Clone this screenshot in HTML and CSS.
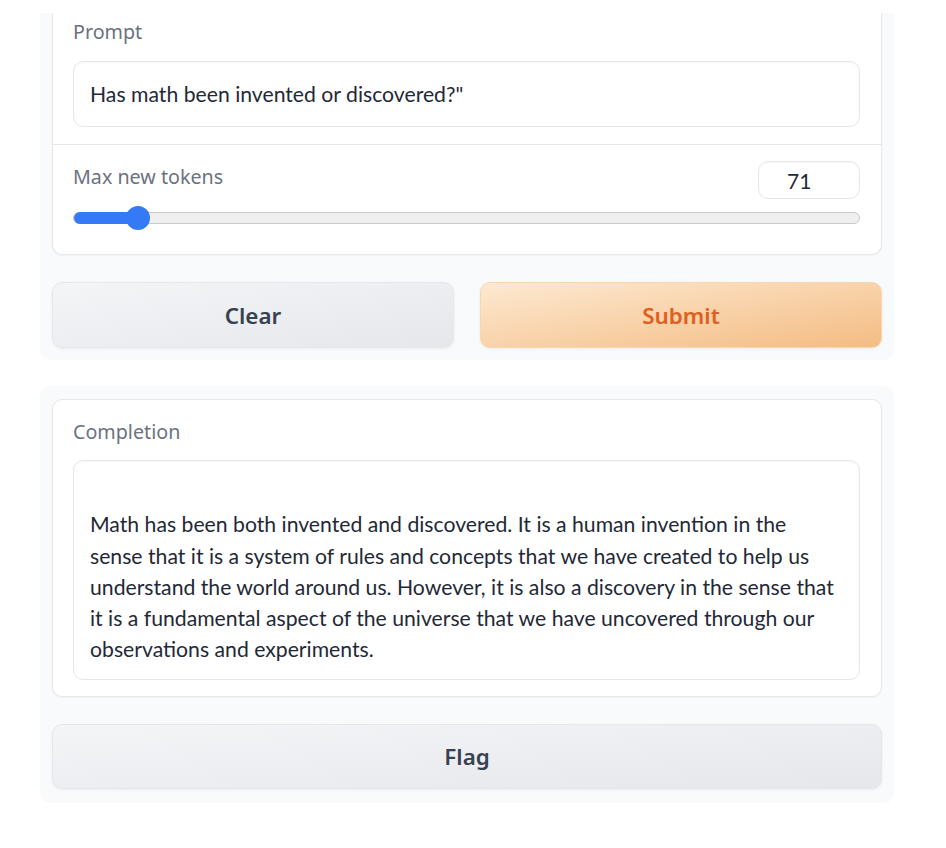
FILE: index.html
```html
<!DOCTYPE html>
<html lang="en">
<head>
<meta charset="utf-8">
<title>Completion demo</title>
<link rel="stylesheet" href="styles.css">
</head>
<body>
<main class="page">
  <section class="panel panel-top">
    <div class="card card-cut">
      <div class="field field-prompt">
        <label class="label">Prompt</label>
        <div class="input">Has math been invented or discovered?"</div>
      </div>
      <div class="field field-slider">
        <div class="slider-head">
          <label class="label label-inline">Max new tokens</label>
          <div class="number">71</div>
        </div>
        <div class="slider">
          <div class="track"></div>
          <div class="fill" style="width: 65px"></div>
          <div class="thumb" style="left: 53px"></div>
        </div>
      </div>
    </div>
    <div class="actions">
      <button class="btn btn-secondary">Clear</button>
      <button class="btn btn-primary">Submit</button>
    </div>
  </section>

  <section class="panel panel-bottom">
    <div class="card">
      <div class="field field-completion">
        <label class="label">Completion</label>
        <div class="output"><br>Math has been both invented and discovered. It is a human invention in the<br>sense that it is a system of rules and concepts that we have created to help us<br>understand the world around us. However, it is also a discovery in the sense that<br>it is a fundamental aspect of the universe that we have uncovered through our<br>observations and experiments.</div>
      </div>
    </div>
    <div class="actions">
      <button class="btn btn-secondary btn-wide">Flag</button>
    </div>
  </section>
</main>
</body>
</html>
```
FILE: styles.css
```css
* { box-sizing: border-box; }

html, body {
  margin: 0;
  padding: 0;
  background: #ffffff;
}

body {
  font-family: "Lato", "Noto Sans", sans-serif;
  color: #1f2937;
}

.page {
  padding-top: 13px;
  padding-left: 40px;
  width: 894px;
}

.panel {
  background: #f9fafb;
  padding: 0 12px 12px;
  border-radius: 0 0 10px 10px;
}

.panel-bottom {
  margin-top: 26px;
  padding: 13px 12px 14px;
  border-radius: 10px;
}

.card {
  background: #ffffff;
  border: 1px solid #e5e7eb;
  border-radius: 10px;
  box-shadow: 0 1px 2px rgba(0, 0, 0, 0.04);
}

.card-cut {
  border-top: none;
  border-radius: 0 0 10px 10px;
}

.field {
  padding: 0 21px 0 20px;
}

.field-prompt {
  padding-top: 5px;
  padding-bottom: 17px;
  border-bottom: 1px solid #e5e7eb;
}

.field-slider {
  padding-top: 16px;
  padding-bottom: 24px;
}

.field-completion {
  padding-top: 18px;
  padding-bottom: 16px;
}

.label {
  display: block;
  font-family: "Noto Sans", sans-serif;
  font-size: 19.7px;
  line-height: 28px;
  color: #6b7280;
  margin-bottom: 15px;
}

.field-completion .label {
  margin-bottom: 14px;
}

.label-inline {
  margin: 2px 0 0;
}

.input {
  border: 1px solid #e5e7eb;
  border-radius: 10px;
  padding: 16px 16px;
  font-size: 21.2px;
  line-height: 32px;
  color: #1f2937;
  box-shadow: inset 0 1px 2px rgba(0, 0, 0, 0.04);
}

.slider-head {
  display: flex;
  justify-content: space-between;
  align-items: flex-start;
}

.number {
  width: 102px;
  height: 38px;
  border: 1px solid #e5e7eb;
  border-radius: 10px;
  padding-left: 28px;
  font-size: 21px;
  line-height: 37px;
  color: #1f2937;
  box-shadow: inset 0 1px 2px rgba(0, 0, 0, 0.04);
}

.slider {
  position: relative;
  height: 24px;
  margin-top: 7px;
}

.track {
  position: absolute;
  left: 0;
  right: 0;
  top: 6px;
  height: 12px;
  background: #efefef;
  border: 1px solid #c9c9c9;
  border-radius: 6px;
}

.fill {
  position: absolute;
  left: 1px;
  top: 6px;
  height: 12px;
  background: #3479f6;
  border-radius: 6px 0 0 6px;
}

.thumb {
  position: absolute;
  top: 0;
  width: 24px;
  height: 24px;
  border-radius: 50%;
  background: #3479f6;
}

.output {
  border: 1px solid #e5e7eb;
  border-radius: 10px;
  padding: 17px 16px 13px;
  font-size: 21.2px;
  line-height: 31.3px;
  color: #1f2937;
  white-space: nowrap;
  box-shadow: inset 0 1px 2px rgba(0, 0, 0, 0.04);
}

.actions {
  display: flex;
  gap: 26px;
  margin-top: 27px;
}

.btn {
  flex: 1 1 0;
  height: 66px;
  border-radius: 10px;
  font-family: "Noto Sans", sans-serif;
  font-weight: 600;
  font-size: 22.4px;
  cursor: pointer;
  box-shadow: 0 1px 3px rgba(0, 0, 0, 0.06);
}

.btn-wide {
  height: 65px;
}

.btn-secondary {
  background: linear-gradient(to bottom right, #f4f5f7, #e5e7eb);
  border: 1px solid #e5e7eb;
  color: #374151;
}

.btn-primary {
  background: linear-gradient(to bottom right, #fde9d1, #f4bc83);
  border: 1px solid #f9d6ad;
  color: #e05f20;
}
```
